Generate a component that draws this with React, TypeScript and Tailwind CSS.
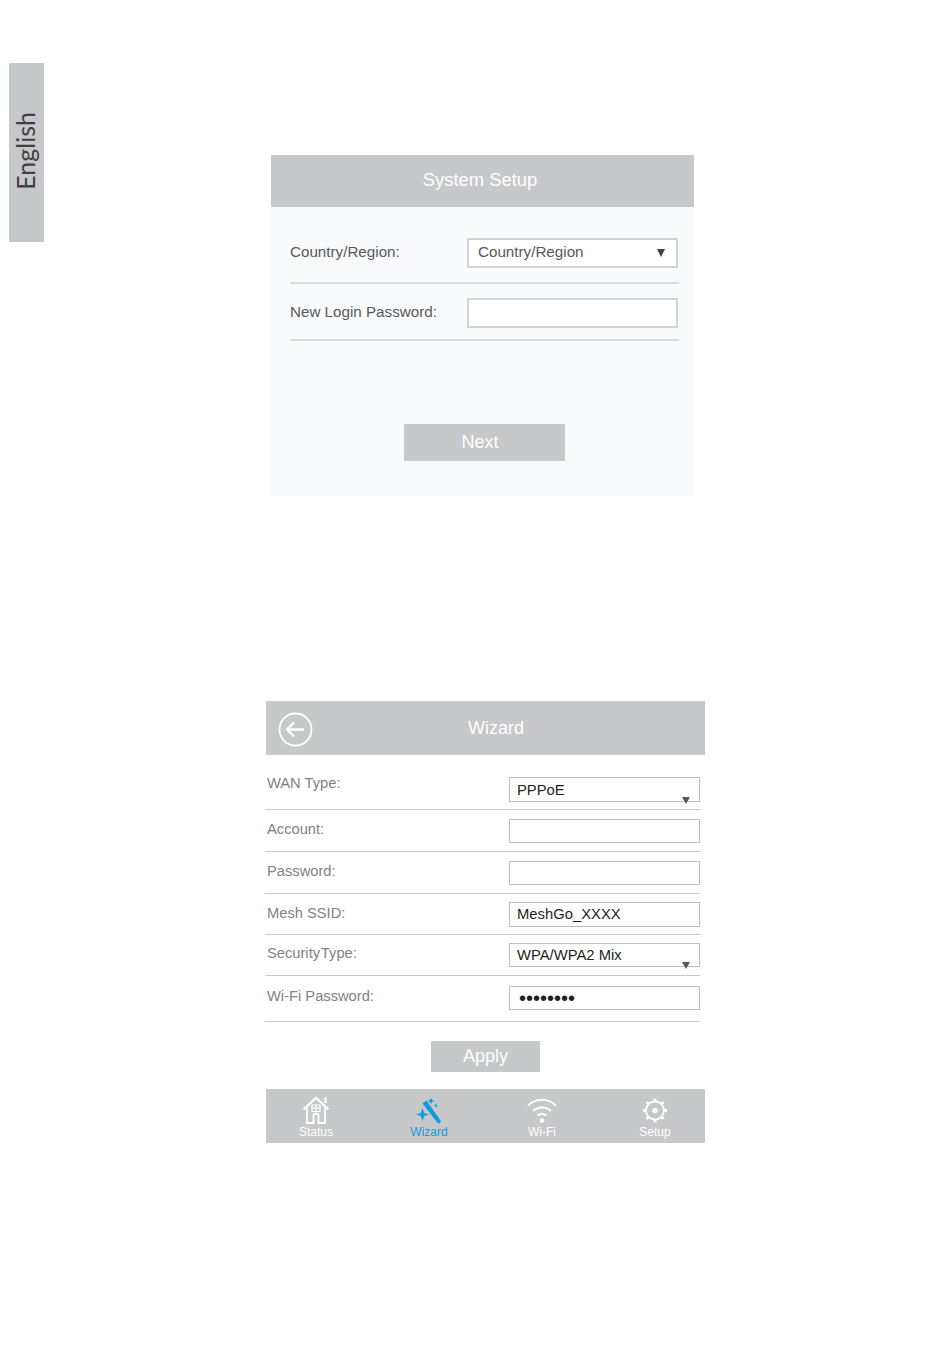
import React from 'react';

const sans = { fontFamily: '"Liberation Sans", Arial, sans-serif' };

const HouseIcon = () => (
  <svg width="28" height="28" viewBox="0 0 28 28" fill="none" stroke="#fff" strokeWidth="1.800">
    <path d="M1.500 13.500 14 1.800l12.500 11.700" strokeWidth="2.200" />
    <path d="M23.500 7V1.500" strokeWidth="2.400" />
    <path d="M5 11.500V27h6.500v-7a2.500 2.500 0 0 1 5 0v7H23V11.500" />
    <path d="M10 9h8v6.500h-8zM14 9v6.500M10 12.200h8" strokeWidth="1.200" />
  </svg>
);

const WandIcon = () => (
  <svg width="26" height="28" viewBox="0 0 26 28" fill="#0f9bdc" className="translate-y-[1px]">
    <path d="M6.500 6.500 10.500 3.500 24.500 23.500a2 2 0 0 1-.6 2.600 2 2 0 0 1-2.700-.5z" />
    <path d="M6.500 11 8.200 16l5 1.500-5 1.500-1.700 5-1.700-5-4.800-1.500 4.800-1.500z" />
    <path d="M15 .5l.9 2.600 2.600.9-2.600.9-.9 2.600-.9-2.600-2.600-.9 2.600-.9z" />
    <path d="M20 6l.6 1.900 1.900.6-1.900.6-.6 1.900-.6-1.900-1.900-.6 1.900-.6z" />
  </svg>
);

const WifiIcon = () => (
  <svg width="30" height="27" viewBox="0 0 30 27" fill="none" stroke="#fff" strokeWidth="1.800">
    <path d="M1 8.500C9 1 21 1 29 8.500" />
    <path d="M6 14C11 9.300 19 9.300 24 14" />
    <path d="M10.500 18.700c2.500-2.400 6.500-2.400 9 0" />
    <circle cx="15" cy="23.500" r="2.300" fill="#fff" stroke="none" />
  </svg>
);

const GearIcon = () => (
  <svg width="26" height="27" viewBox="0 0 26 27" fill="none" stroke="#fff">
    <circle cx="13" cy="13.500" r="9" strokeWidth="1.800" />
    <path
      d="M13 1.500v3M13 22.500v3M1 13.500h3M22 13.500h3M4.500 5l2.100 2.100M19.400 19.900l2.100 2.100M21.500 5l-2.100 2.100M6.600 19.900l-2.100 2.100"
      strokeWidth="3"
    />
    <circle cx="13" cy="13.500" r="2.800" fill="#fff" stroke="none" />
  </svg>
);

const BackIcon = () => (
  <svg width="35" height="35" viewBox="0 0 35 35" fill="none" stroke="#fff">
    <circle cx="17.500" cy="17.500" r="16" strokeWidth="1.800" />
    <path d="M9 17.500h17M16 10.500l-7 7 7 7" strokeWidth="2.400" />
  </svg>
);

const wizardRows = [
  { label: 'WAN Type:', value: 'PPPoE', select: true, row: 'h-[55px] pt-[22px]', labelTop: '-mt-[3px]', box: 'h-[25px] pl-[7px] text-[14.800px]', valueTop: 'pt-[2px]' },
  { label: 'Account:', value: '', row: 'h-[42px] pt-[9px]', labelTop: 'mt-[1px]', box: 'h-[24px] pl-[7px] text-[14.800px]' },
  { label: 'Password:', value: '', row: 'h-[42px] pt-[9px]', labelTop: 'mt-[1px]', box: 'h-[24px] pl-[7px] text-[14.800px]' },
  { label: 'Mesh SSID:', value: 'MeshGo_XXXX', row: 'h-[41px] pt-[8px]', labelTop: 'mt-[2px]', box: 'h-[25px] pl-[7px] text-[14.800px]' },
  { label: 'Security Type:', value: 'WPA/WPA2 Mix', select: true, row: 'h-[41px] pt-[8px]', labelTop: 'mt-[1px] [word-spacing:-3px]', box: 'h-[24px] pl-[7px] text-[14.800px]', valueTop: 'pt-[1px]' },
  { label: 'Wi-Fi Password:', value: '••••••••', row: 'h-[46px] pt-[10px]', labelTop: 'mt-[1px]', box: 'h-[24px] pl-[9px] text-[20px]' },
];

const navItems = [
  { label: 'Status', icon: <HouseIcon />, color: 'text-white' },
  { label: 'Wizard', icon: <WandIcon />, color: 'text-[#0f9bdc]' },
  { label: 'Wi-Fi', icon: <WifiIcon />, color: 'text-white' },
  { label: 'Setup', icon: <GearIcon />, color: 'text-white' },
];

const App: React.FC = () => {
  return (
    <div className="flex h-[1357px] w-[950px] overflow-hidden bg-white pl-[9px] pt-[63px]" style={sans}>
      {/* language tab */}
      <div className="flex h-[179px] w-[35px] shrink-0 items-center justify-center bg-[#c7c8ca] pb-[3px] pr-[2px]">
        <span
          className="rotate-180 whitespace-nowrap text-[25px] leading-none text-[#414042] [writing-mode:vertical-rl]"
          style={{ fontFamily: '"Lato", "Noto Sans", sans-serif' }}
        >
          English
        </span>
      </div>

      <div className="flex flex-col pt-[92px]">
        {/* system setup */}
        <div className="ml-[227px] h-[341px] w-[423px] bg-[#f9fafc]">
          <div className="flex h-[52px] items-center justify-center bg-[#c7c8ca] pb-[3px] pr-[5px] text-[18.400px] text-white">
            System Setup
          </div>
          <div className="px-[19px]">
            <div className="flex h-[77px] w-[389px] border-b-2 border-[#d8dadc] pt-[31px]">
              <div className="w-[177px] pt-[4px] text-[15.200px] leading-[20px] text-[#58595b]">Country/Region:</div>
              <div className="flex h-[30px] w-[211px] items-center justify-between border-2 border-[#d1d3d4] bg-white pb-[1px] pl-[9px] pr-[11px] text-[15.200px] text-[#58595b]">
                <span>Country/Region</span>
                <span className="h-0 w-0 border-x-[4px] border-t-[8px] border-x-transparent border-t-[#414042]" />
              </div>
            </div>
            <div className="flex h-[57px] w-[389px] border-b-2 border-[#d8dadc] pt-[14px]">
              <div className="w-[177px] pt-[4px] text-[15.200px] leading-[20px] text-[#58595b]">New Login Password:</div>
              <div className="h-[30px] w-[211px] border-2 border-[#d1d3d4] bg-white" />
            </div>
            <div className="ml-[114px] mt-[83px] flex h-[37px] w-[161px] items-center justify-center bg-[#c7c8ca] pr-[9px] text-[18px] text-white">
              Next
            </div>
          </div>
        </div>

        {/* wizard */}
        <div className="ml-[222px] mt-[205px] w-[439px]">
          <div className="relative flex h-[54px] items-center justify-center bg-[#c7c8ca] text-[18px] text-white">
            <span className="absolute left-[12px] top-[11px]">
              <BackIcon />
            </span>
            <span className="pl-[21px]">Wizard</span>
          </div>

          <div className="-ml-px w-[435px]">
            {wizardRows.map((r) => (
              <div key={r.label} className={`flex justify-between border-b border-[#c7c8ca] ${r.row}`}>
                <div className={`pl-[2px] text-[14.700px] leading-[18px] text-[#808285] ${r.labelTop}`}>{r.label}</div>
                <div className={`relative flex w-[191px] items-center border border-[#bcbec0] bg-white text-[#231f20] ${r.box}`}>
                  <span className={r.valueTop}>{r.value}</span>
                  {r.select && (
                    <span className="absolute bottom-[-3px] right-[9px] h-0 w-0 border-x-[4px] border-t-[7px] border-x-transparent border-t-[#58595b]" />
                  )}
                </div>
              </div>
            ))}
          </div>

          <div className="ml-[165px] mt-[19px] flex h-[31px] w-[109px] items-center justify-center bg-[#c7c8ca] text-[18px] text-white">
            Apply
          </div>

          <div className="mt-[17px] flex h-[54px] gap-[33px] bg-[#c7c8ca] pl-[10px]">
            {navItems.map((item) => (
              <div key={item.label} className="flex w-[80px] flex-col items-center pt-[6px]">
                <div className="flex h-[30px] items-center justify-center">{item.icon}</div>
                <span className={`text-[12px] leading-[14px] ${item.color}`}>{item.label}</span>
              </div>
            ))}
          </div>
        </div>
      </div>
    </div>
  );
};

export default App;
